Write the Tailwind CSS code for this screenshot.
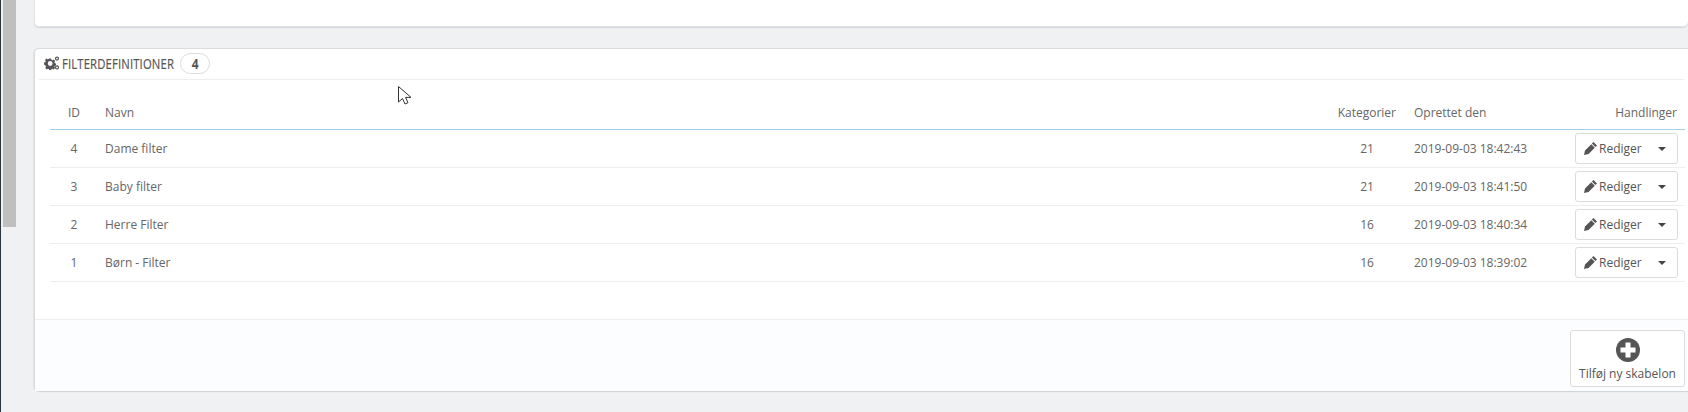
<!DOCTYPE html>
<html><head><meta charset="utf-8"><script src="https://cdn.jsdelivr.net/npm/@tailwindcss/browser@4"></script></head>
<body class="m-0 p-0">
<div class="relative w-[1688px] h-[412px] overflow-hidden bg-[#eff1f3] font-['Open_Sans',sans-serif] text-[12px] text-[#666]">
  <div class="absolute left-0 top-0 w-[1px] h-full bg-[#2c3440]"></div>
  <div class="absolute left-[3px] top-0 w-[13px] h-[227px] bg-[#bfbfbf]"></div>
  <div class="pl-[34px] flex flex-col">
    <div class="h-[28px] -mt-px bg-white rounded-b-[5px] border border-t-0 border-r-0 border-[#dfe3e6] shadow-[0_1px_1px_#d3d8db]"></div>
    <div class="mt-[21px] h-[343px] bg-white rounded-l-[5px] border-t border-l border-[#d9dde0] shadow-[0_1px_1px_#cdd2d5,-1px_0_0_#e2e5e8] flex flex-col">
      <div class="mx-[4px] h-[31px] border-b border-[#eeeeee] flex items-center pl-[5px] pb-[2px] shrink-0">
        <svg width="16" height="14" viewBox="0 0 16 14" class="shrink-0 text-[#555]" fill="currentColor">
          <path fill-rule="evenodd" d="M5.200 2.600h2l.3 1.300 1 .4 1.200-.7 1.400 1.400-.7 1.200.4 1 1.300.3v2l-1.300.3-.4 1 .7 1.200-1.400 1.400-1.200-.7-1 .4-.3 1.300h-2l-.3-1.300-1-.4-1.200.7-1.400-1.400.7-1.200-.4-1L0 8.500v-2l1.300-.3.4-1-.7-1.200 1.400-1.400 1.200.7 1-.4zM6.200 5.100a2.400 2.400 0 1 0 0 4.800 2.400 2.400 0 0 0 0-4.800z"/>
          <path fill-rule="evenodd" d="M13 .5a2.100 2.100 0 1 0 0 4.200 2.100 2.100 0 0 0 0-4.200zm0 1.200a.9.9 0 1 1 0 1.800.9.9 0 0 1 0-1.800zM13 9.300a2.100 2.100 0 1 0 0 4.200 2.100 2.100 0 0 0 0-4.200zm0 1.200a.9.9 0 1 1 0 1.800.9.9 0 0 1 0-1.800z"/>
        </svg>
        <span class="ml-[2px] w-[112px] inline-block whitespace-nowrap origin-left scale-x-[0.805] text-[14px] tracking-[0.2px] text-[#555] [-webkit-text-stroke:0.2px_#555]">FILTERDEFINITIONER</span>
        <span class="ml-[6px] w-[30px] h-[21px] rounded-full border border-[#dcdcdc] flex items-center justify-center font-bold text-[15px] text-[#555]"><span class="scale-x-[0.8]">4</span></span>
      </div>
      <div class="ml-[15px] mr-[3px] mt-[16px] shrink-0">
        <table class="w-full table-fixed border-collapse">
          <thead>
            <tr class="h-[33px] border-b border-[#a0d0e6] text-[#666]">
              <th class="w-[48px] font-normal text-center pt-[2px]">ID</th>
              <th class="font-normal text-left pl-[7px] pt-[2px]">Navn</th>
              <th class="w-[60px] font-normal text-right pt-[2px]">Kategorier</th>
              <th class="w-[18px]"></th>
              <th class="w-[139px] font-normal text-left pt-[2px]">Oprettet den</th>
              <th class="w-[132px] font-normal text-right pr-[8px] pt-[2px]">Handlinger</th>
            </tr>
          </thead>
          <tbody>
            <tr class="h-[38px] border-b border-[#eeeeee]"><td class="text-center pt-[2px]">4</td><td class="pl-[7px] pt-[2px]">Dame filter</td><td class="text-center pl-[2px] pt-[2px]">21</td><td></td><td class="pt-[2px]">2019-09-03 18:42:43</td><td class="text-right pr-[7px] pt-[1px]"><div class="inline-flex items-center w-[103px] h-[31px] bg-white border border-[#dcdcdc] rounded-[3px] pl-[8px] align-middle text-[#555]"><svg width="13" height="13" viewBox="0 0 13 13" fill="#555" class="mr-[2px]"><path d="M9.500 0 13 3.500 11.400 5.100 7.900 1.600zM7.300 2.200l3.500 3.500-6.300 6.300L0 13l1-4.500z"/></svg><span>Rediger</span><span class="ml-[16px] w-0 h-0 border-x-[4px] border-x-transparent border-t-[4px] border-t-[#444]"></span></div></td></tr>
            <tr class="h-[38px] border-b border-[#eeeeee]"><td class="text-center pt-[2px]">3</td><td class="pl-[7px] pt-[2px]">Baby filter</td><td class="text-center pl-[2px] pt-[2px]">21</td><td></td><td class="pt-[2px]">2019-09-03 18:41:50</td><td class="text-right pr-[7px] pt-[1px]"><div class="inline-flex items-center w-[103px] h-[31px] bg-white border border-[#dcdcdc] rounded-[3px] pl-[8px] align-middle text-[#555]"><svg width="13" height="13" viewBox="0 0 13 13" fill="#555" class="mr-[2px]"><path d="M9.500 0 13 3.500 11.400 5.100 7.900 1.600zM7.300 2.200l3.500 3.500-6.300 6.300L0 13l1-4.500z"/></svg><span>Rediger</span><span class="ml-[16px] w-0 h-0 border-x-[4px] border-x-transparent border-t-[4px] border-t-[#444]"></span></div></td></tr>
            <tr class="h-[38px] border-b border-[#eeeeee]"><td class="text-center pt-[2px]">2</td><td class="pl-[7px] pt-[2px]">Herre Filter</td><td class="text-center pl-[2px] pt-[2px]">16</td><td></td><td class="pt-[2px]">2019-09-03 18:40:34</td><td class="text-right pr-[7px] pt-[1px]"><div class="inline-flex items-center w-[103px] h-[31px] bg-white border border-[#dcdcdc] rounded-[3px] pl-[8px] align-middle text-[#555]"><svg width="13" height="13" viewBox="0 0 13 13" fill="#555" class="mr-[2px]"><path d="M9.500 0 13 3.500 11.400 5.100 7.900 1.600zM7.300 2.200l3.500 3.500-6.300 6.300L0 13l1-4.500z"/></svg><span>Rediger</span><span class="ml-[16px] w-0 h-0 border-x-[4px] border-x-transparent border-t-[4px] border-t-[#444]"></span></div></td></tr>
            <tr class="h-[38px] border-b border-[#eeeeee]"><td class="text-center pt-[2px]">1</td><td class="pl-[7px] pt-[2px]">Børn - Filter</td><td class="text-center pl-[2px] pt-[2px]">16</td><td></td><td class="pt-[2px]">2019-09-03 18:39:02</td><td class="text-right pr-[7px] pt-[1px]"><div class="inline-flex items-center w-[103px] h-[31px] bg-white border border-[#dcdcdc] rounded-[3px] pl-[8px] align-middle text-[#555]"><svg width="13" height="13" viewBox="0 0 13 13" fill="#555" class="mr-[2px]"><path d="M9.500 0 13 3.500 11.400 5.100 7.900 1.600zM7.300 2.200l3.500 3.500-6.300 6.300L0 13l1-4.500z"/></svg><span>Rediger</span><span class="ml-[16px] w-0 h-0 border-x-[4px] border-x-transparent border-t-[4px] border-t-[#444]"></span></div></td></tr>
          </tbody>
        </table>
      </div>
      <div class="mt-[37px] flex-1 bg-[#fcfdfe] border-t border-[#eeeeee] flex justify-end items-start pt-[10px] pr-[3px]">
        <div class="w-[115px] h-[57px] bg-white border border-[#dcdcdc] rounded-[3px] flex flex-col items-center pt-[7px]">
          <svg width="24" height="24" viewBox="0 0 24 24"><circle cx="12" cy="12" r="12" fill="#555"/><path d="M9.500 4.500h5v5h5v5h-5v5h-5v-5h-5v-5h5z" fill="#fff"/></svg>
          <span class="mt-[3px] text-[#555] leading-[17px] whitespace-nowrap">Tilføj ny skabelon</span>
        </div>
      </div>
    </div>
  </div>
  <svg class="absolute left-[398px] top-[86px]" width="15" height="20" viewBox="0 0 15 20"><path d="M.5.5V16l4-3.500 2.500 5.500 3-1.300-2.500-5.300H13z" fill="#fff" stroke="#333" stroke-width="1"/></svg>
</div>
</body></html>
